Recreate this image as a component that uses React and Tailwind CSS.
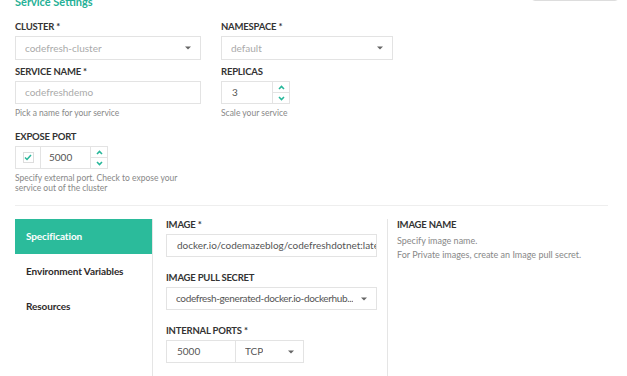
import React from "react";

const teal = "#27b79a";

function Caret() {
  return (
    <svg width="6" height="4" viewBox="0 0 6 4" className="shrink-0">
      <path d="M0 0.5h6L3 3.5z" fill="#666" />
    </svg>
  );
}

function Spinner() {
  return (
    <div className="flex w-[17px] flex-col border-l border-[#e3e3e3]">
      <div className="flex flex-1 items-center justify-center border-b border-[#e3e3e3]">
        <svg width="7" height="5" viewBox="0 0 7 5">
          <path d="M1 4l2.5-2.5L6 4" stroke={teal} strokeWidth="1.6" fill="none" />
        </svg>
      </div>
      <div className="flex flex-1 items-center justify-center">
        <svg width="7" height="5" viewBox="0 0 7 5">
          <path d="M1 1l2.5 2.5L6 1" stroke={teal} strokeWidth="1.6" fill="none" />
        </svg>
      </div>
    </div>
  );
}

function Label({ children }) {
  return (
    <div className="mb-[3px] h-[12px] text-[9.5px] leading-[12px] font-bold tracking-[-0.2px] uppercase text-[#333]">
      {children}
    </div>
  );
}

function Select({ value, muted, className = "", textClass = "" }) {
  return (
    <div
      className={`flex items-center justify-between border border-[#e3e3e3] pl-[9px] pr-[9px] text-[10px] ${muted ? "text-[#aaa]" : "text-[#555]"} ${className}`}
    >
      <span className={`overflow-hidden whitespace-nowrap ${textClass}`}>{value}</span>
      <Caret />
    </div>
  );
}

function Help({ children, className = "" }) {
  return <p className={`text-[8.5px] leading-[10px] text-[#888] ${className}`}>{children}</p>;
}

export default function App() {
  const navItems = ["Specification", "Environment Variables", "Resources"];

  return (
    <div className="relative flex h-[376px] w-[627px] flex-col overflow-hidden bg-white font-['Lato',sans-serif]">
      <div className="flex h-[21px] justify-between pl-[15px] pr-[8px]">
        <h2 className="-mt-[4px] text-[11px] leading-[12px] font-bold text-[#25b096]">Service Settings</h2>
        <div className="-mt-[19px] h-[20px] w-[88px] rounded border border-[#ddd]" />
      </div>

      <div className="grid grid-cols-[186px_172px] gap-x-[20px] px-[15px]">
        <div>
          <Label>Cluster *</Label>
          <Select value="codefresh-cluster" muted className="h-[24px]" />
        </div>
        <div>
          <Label>Namespace *</Label>
          <Select value="default" muted className="h-[24px]" />
        </div>

        <div className="mt-[6px]">
          <Label>Service Name *</Label>
          <div className="mt-[1px] flex h-[23px] items-center border border-[#e3e3e3] pl-[9px] text-[10px] text-[#aaa]">
            codefreshdemo
          </div>
          <Help className="mt-[4px]">Pick a name for your service</Help>
        </div>
        <div className="mt-[6px]">
          <Label>Replicas</Label>
          <div className="mt-[1px] flex h-[23px] w-[69px] border border-[#e3e3e3]">
            <div className="flex flex-1 items-center pl-[10px] text-[10px] text-[#555]">3</div>
            <Spinner />
          </div>
          <Help className="mt-[4px]">Scale your service</Help>
        </div>

        <div className="col-span-2 mt-[13px]">
          <Label>Expose Port</Label>
          <div className="mt-[1px] flex h-[23px] w-[93px] border border-[#e3e3e3]">
            <div className="flex w-[25px] items-center justify-center border-r border-[#e3e3e3]">
              <div className="flex h-[11px] w-[11px] items-center justify-center border border-[#ddd]">
                <svg width="8" height="7" viewBox="0 0 8 7">
                  <path d="M1 3.5l2 2L7 1" stroke={teal} strokeWidth="1.5" fill="none" />
                </svg>
              </div>
            </div>
            <div className="flex flex-1 items-center pl-[8px] text-[10px] text-[#555]">5000</div>
            <Spinner />
          </div>
          <Help className="mt-[4px]">
            Specify external port. Check to expose your
            <br />
            service out of the cluster
          </Help>
        </div>
      </div>

      <div className="mt-[12px] ml-[15px] mr-[19px] h-px bg-[#eee]" />

      <div className="mt-[13px] ml-[15px] flex flex-1">
        <div className="w-[138px] border-r border-[#e5e5e5]">
          {navItems.map((item, i) => (
            <div
              key={item}
              className={`flex h-[35px] items-center pl-[11px] text-[10px] font-bold tracking-[-0.1px] ${i === 0 ? "bg-[#2bbb9b] text-white" : "text-[#2e2a2a]"}`}
            >
              {item}
            </div>
          ))}
        </div>

        <div className="w-[235px] border-r border-[#e5e5e5] pl-[13px] pr-[10px]">
          <Label>Image *</Label>
          <div className="flex h-[23px] items-center overflow-hidden whitespace-nowrap border border-[#e3e3e3] pl-[10px] text-[10px] text-[#555]">
            docker.io/codemazeblog/codefreshdotnet:latest
          </div>

          <div className="mt-[15px]">
            <Label>Image Pull Secret</Label>
            <Select
              value="codefresh-generated-docker.io-dockerhub..."
              className="h-[23px] pr-[7px]"
              textClass="tracking-[-0.35px]"
            />
          </div>

          <div className="mt-[15px]">
            <Label>Internal Ports *</Label>
            <div className="flex h-[23px]">
              <div className="flex w-[70px] items-center border border-[#e3e3e3] pl-[10px] text-[10px] text-[#555]">5000</div>
              <Select value="TCP" className="w-[68px] border-l-0" />
            </div>
          </div>
        </div>

        <div className="pl-[9px]">
          <Label>Image Name</Label>
          <p className="mt-[2px] text-[9px] leading-[14px] text-[#888]">
            Specify image name.
            <br />
            For Private images, create an Image pull secret.
          </p>
        </div>
      </div>
    </div>
  );
}
